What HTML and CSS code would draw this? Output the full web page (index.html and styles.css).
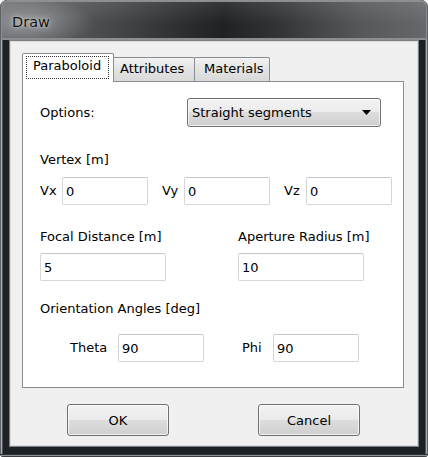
FILE: index.html
```html
<!DOCTYPE html>
<html lang="en">
  <head>
    <meta charset="UTF-8" />
    <title>Draw</title>
    <link rel="stylesheet" href="styles.css">
  </head>
  <body>
    <div class="window">
      <div class="titlebar">
        <span class="title">Draw</span>
      </div>
      <div class="frame">
        <div class="client">
          <div class="tabs">
            <div class="tab selected"><span class="focus">Paraboloid</span></div>
            <div class="tab">Attributes</div>
            <div class="tab">Materials</div>
          </div>
          <div class="pane">
            <div class="row options-row">
              <span class="options-label">Options:</span>
              <div class="combo">
                <span>Straight segments</span>
                <svg width="9" height="5" viewBox="0 0 9 5"><path d="M0 0h9L4.5 5z" fill="#000"/></svg>
              </div>
            </div>

            <div class="label vertex-label">Vertex [m]</div>
            <div class="row vertex-row">
              <div class="pair"><span class="short">Vx</span><input class="field small" value="0"></div>
              <div class="pair"><span class="short">Vy</span><input class="field small" value="0"></div>
              <div class="pair"><span class="short">Vz</span><input class="field small" value="0"></div>
            </div>

            <div class="row two-col">
              <div class="col">
                <div class="label">Focal Distance [m]</div>
                <input class="field wide" value="5">
              </div>
              <div class="col">
                <div class="label">Aperture Radius [m]</div>
                <input class="field wide" value="10">
              </div>
            </div>

            <div class="label angles-label">Orientation Angles [deg]</div>
            <div class="row angles-row">
              <span class="theta">Theta</span><input class="field small" value="90">
              <span class="phi">Phi</span><input class="field small" value="90">
            </div>
          </div>

          <div class="buttons">
            <button class="btn">OK</button>
            <button class="btn">Cancel</button>
          </div>
        </div>
      </div>
    </div>
  </body>
</html>
```
FILE: styles.css
```css
* {
  margin: 0;
  padding: 0;
  box-sizing: border-box;
}
body {
  background: #fff;
  font-family: "DejaVu Sans", sans-serif;
  font-size: 13px;
  color: #000;
  overflow: hidden;
}
.window {
  width: 428px;
  height: 457px;
  display: flex;
  flex-direction: column;
  border-radius: 7px 7px 4px 4px;
  overflow: hidden;
  background: #1c2125;
}
.titlebar {
  height: 40px;
  flex: none;
  border-radius: 7px 7px 0 0;
  padding: 3px 0 0 12px;
  display: flex;
  align-items: center;
  background:
    radial-gradient(ellipse 62px 24px at 32px 22px, rgba(255, 255, 255, 0.3), transparent),
    linear-gradient(to bottom, rgba(255, 255, 255, 0.1), rgba(0, 0, 0, 0) 60%),
    linear-gradient(90deg, #6b6e71 0%, #4f5255 20%, #303336 40%, #1f2224 52%, #303336 64%, #55585b 84%, #66696c 100%);
  box-shadow: inset 0 1px 0 #8e9194, inset 1px 0 0 #5e6165, inset -1px 0 0 #5e6165, inset 0 0 0 2px #8b8e91;
}
.title {
  font-size: 14.5px;
  color: #111;
  text-shadow: 0 0 6px rgba(255, 255, 255, 0.7), 0 0 2px rgba(255, 255, 255, 0.5);
}
.frame {
  flex: 1;
  padding: 0 9px 10px 9px;
  display: flex;
  background: linear-gradient(90deg, #5f6266 0 1px, #a6a9ac 1px 2px, #55595d 2px 3px, #1c2125 3px calc(100% - 3px), #55595d calc(100% - 3px) calc(100% - 2px), #a6a9ac calc(100% - 2px) calc(100% - 1px), #5f6266 calc(100% - 1px));
  box-shadow: inset 0 -1px 0 #3a3e42, inset 0 -2px 0 #8d9094, inset 0 -3px 0 #2c3034;
}
.client {
  flex: 1;
  background: #f0f0f0;
  border: 1px solid #7c8084;
  box-shadow: inset 0 0 0 1px #dcdcdc;
  padding: 12px 14px 0 12px;
}

/* tabs */
.tabs {
  display: flex;
  align-items: flex-end;
  height: 28px;
  position: relative;
  z-index: 1;
}
.tab {
  height: 24px;
  padding: 3px 7px 0 6px;
  border: 1px solid #898c95;
  border-bottom: none;
  border-radius: 2px 2px 0 0;
  background: linear-gradient(to bottom, #f2f2f2, #e3e3e3 50%, #d9d9d9);
  margin-left: -1px;
}
.tab.selected {
  height: 29px;
  padding: 2px 4px 0 3px;
  margin-left: 0;
  background: #fff;
  width: 92px;
  margin-bottom: -1px;
}
.focus {
  display: block;
  border: 1px dotted #333;
  padding: 1px 5px 3px 6px;
  height: 23px;
}
.tab:nth-child(2) {
  width: 82px;
  padding-left: 6px;
}
.tab:nth-child(3) {
  width: 76px;
  padding-left: 9px;
}
.pane {
  background: #fff;
  border: 1px solid #898c95;
  height: 307px;
  padding: 16px 0 0 17px;
  line-height: 16px;
}

.row {
  display: flex;
  align-items: center;
}
.options-row {
  height: 29px;
}
.options-label {
  width: 147px;
}
.combo {
  width: 194px;
  height: 29px;
  border: 1px solid #707070;
  border-radius: 3px;
  background: linear-gradient(to bottom, #f3f3f3 0, #ebebeb 48%, #dddddd 50%, #cfcfcf 100%);
  box-shadow: inset 0 0 0 1px rgba(255, 255, 255, 0.7);
  display: flex;
  align-items: center;
  justify-content: space-between;
  padding: 0 9px 0 4px;
}
.combo svg {
  display: block;
}

.label {
  height: 16px;
}
.vertex-label {
  margin-top: 25px;
}
.vertex-row {
  margin-top: 9px;
}
.pair {
  display: flex;
  align-items: center;
}
.pair + .pair {
  margin-left: 14px;
}
.short {
  width: 22px;
}
.field {
  height: 28px;
  border: 1px solid #d3d6dc;
  border-top-color: #c4c7ce;
  border-radius: 2px;
  background: #fff;
  font-family: "DejaVu Sans", sans-serif;
  font-size: 13px;
  color: #000;
  padding: 0 3px;
  outline: none;
}
.small {
  width: 86px;
}
.wide {
  width: 126px;
  margin-top: 8px;
  display: block;
}
.two-col {
  margin-top: 24px;
  align-items: flex-start;
}
.col {
  width: 198px;
}
.col + .col {
  width: 140px;
}
.angles-label {
  margin-top: 20px;
}
.angles-row {
  margin-top: 17px;
  padding-left: 30px;
}
.theta {
  width: 48px;
}
.phi {
  width: 31px;
  margin-left: 38px;
}

.buttons {
  display: flex;
  padding-left: 45px;
  margin-top: 16px;
}
.btn {
  width: 102px;
  height: 32px;
  border: 1px solid #707070;
  border-radius: 3px;
  background: linear-gradient(to bottom, #f2f2f2 0, #ebebeb 48%, #dddddd 50%, #cfcfcf 100%);
  box-shadow: inset 0 0 0 1px rgba(255, 255, 255, 0.7);
  font-family: "DejaVu Sans", sans-serif;
  font-size: 13px;
  color: #000;
}
.btn + .btn {
  margin-left: 89px;
}
```
